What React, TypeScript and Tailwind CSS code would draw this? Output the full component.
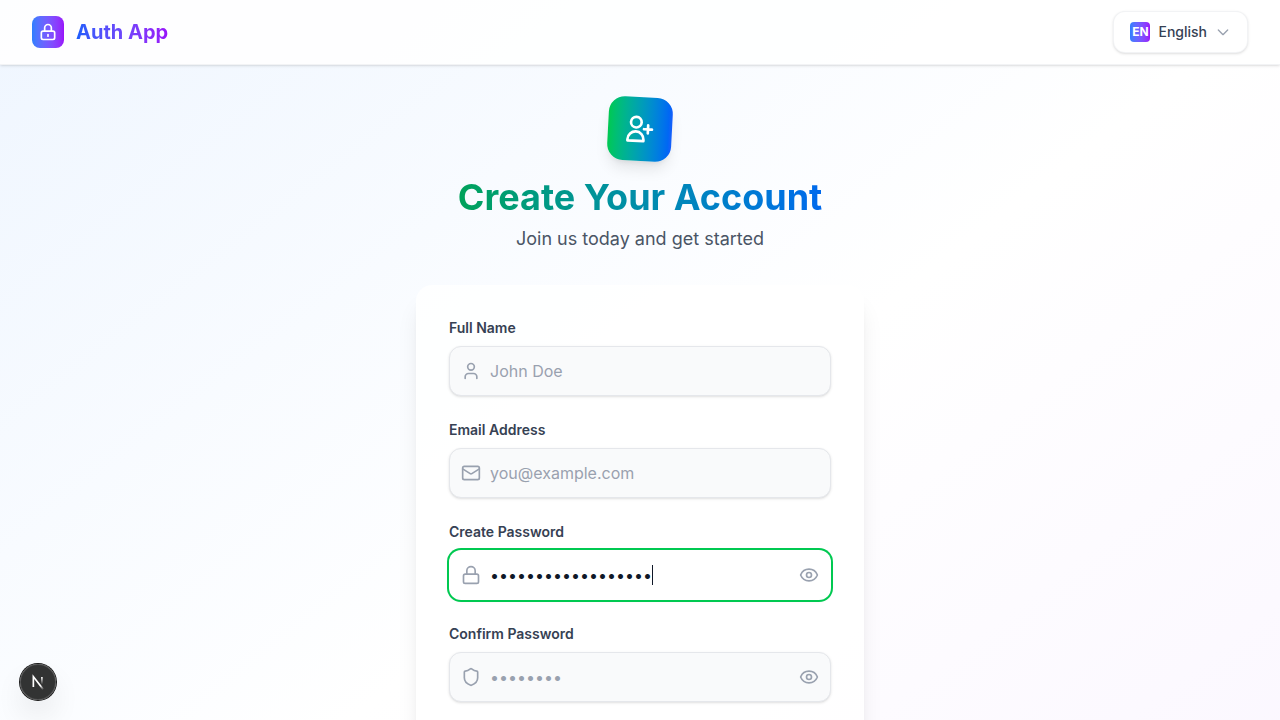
import { useState } from "react";
import type { ReactNode } from "react";
import { Eye, EyeOff, Lock, Mail, Shield, User } from "lucide-react";

type OutlineIconProps = { className?: string; d: string };

function OutlineIcon({ className, d }: OutlineIconProps) {
  return (
    <svg
      className={className}
      viewBox="0 0 24 24"
      fill="none"
      stroke="currentColor"
      strokeWidth={2}
      strokeLinecap="round"
      strokeLinejoin="round"
      aria-hidden="true"
    >
      <path d={d} />
    </svg>
  );
}

type FieldProps = {
  id: string;
  label: string;
  type: string;
  placeholder: string;
  icon: ReactNode;
  initialValue?: string;
  autoFocus?: boolean;
};

// Left text edge of the input and the advance of one masked character.
const TEXT_START = 41;
const BULLET_ADVANCE = 9;

function Field({ id, label, type, placeholder, icon, initialValue = "", autoFocus }: FieldProps) {
  const [visible, setVisible] = useState(false);
  const [value, setValue] = useState(initialValue);
  const isPassword = type === "password";
  const masked = isPassword && !visible && value.length > 0;
  return (
    <div>
      <label htmlFor={id} className="mb-2 block text-sm font-semibold text-gray-700">
        {label}
      </label>
      <div className="relative">
        <input
          id={id}
          type={isPassword && visible ? "text" : type}
          placeholder={placeholder}
          value={value}
          onChange={(event) => setValue(event.target.value)}
          autoFocus={autoFocus}
          className={`peer block w-full rounded-xl border border-gray-200 bg-gray-50 py-3 pr-12 pl-10 text-base text-gray-900 shadow-sm placeholder:text-gray-400 focus:border-transparent focus:bg-white focus:ring-2 focus:ring-green-500 focus:outline-none ${masked ? "caret-transparent" : ""}`}
        />
        <span className="pointer-events-none absolute inset-y-0 left-0 flex items-center pl-3 text-gray-400">
          {icon}
        </span>
        {masked && (
          <span
            aria-hidden="true"
            className="pointer-events-none absolute inset-y-0 hidden items-center peer-focus:flex"
            style={{ left: TEXT_START + BULLET_ADVANCE * value.length }}
          >
            <span className="h-5 w-px bg-gray-900" />
          </span>
        )}
        {isPassword && (
          <button
            type="button"
            aria-label={visible ? "Hide password" : "Show password"}
            onClick={() => setVisible(!visible)}
            className="absolute inset-y-0 right-0 flex items-center pr-3 text-gray-400"
          >
            {visible ? <EyeOff className="size-5" /> : <Eye className="size-5" />}
          </button>
        )}
      </div>
    </div>
  );
}

export default function App() {
  return (
    <div className="min-h-screen bg-linear-to-br from-blue-50 via-white to-purple-50 pb-64 font-['Inter',sans-serif]">
      <header className="sticky top-0 z-10 border-b border-gray-200/50 bg-white/90 shadow-sm">
        <div className="flex h-16 items-center justify-between px-8">
          <a href="#" className="flex items-center gap-3">
            <span className="flex size-8 items-center justify-center rounded-lg bg-linear-to-r from-blue-500 to-purple-600 text-white">
              <OutlineIcon
                className="size-5"
                d="M12 15v2m-6 4h12a2 2 0 002-2v-6a2 2 0 00-2-2H6a2 2 0 00-2 2v6a2 2 0 002 2zm10-10V7a4 4 0 00-8 0v4h8z"
              />
            </span>
            <span className="bg-linear-to-r from-blue-600 to-purple-600 bg-clip-text text-xl font-bold text-transparent">
              Auth App
            </span>
          </a>
          <button
            type="button"
            className="flex items-center gap-2 rounded-xl border border-gray-200/50 bg-white px-4 py-2.5 text-sm font-medium text-gray-700 shadow-sm"
          >
            <span className="flex size-5 items-center justify-center rounded-sm bg-linear-to-r from-blue-500 to-purple-600 text-xs font-bold text-white">
              EN
            </span>
            <span>English</span>
            <OutlineIcon className="size-4 text-gray-400" d="m19 9-7 7-7-7" />
          </button>
        </div>
      </header>

      <main className="mx-auto max-w-md pt-8">
        <div className="mb-8 text-center">
          <div className="mx-auto mb-4 flex size-16 rotate-3 items-center justify-center rounded-2xl bg-linear-to-r from-green-500 to-blue-600 text-white shadow-lg">
            <OutlineIcon
              className="size-8"
              d="M18 9v3m0 0v3m0-3h3m-3 0h-3m-2-5a4 4 0 11-8 0 4 4 0 018 0zM3 20a6 6 0 0112 0v1H3v-1z"
            />
          </div>
          <h1 className="mb-2 bg-linear-to-r from-green-600 to-blue-600 bg-clip-text text-4xl font-bold text-transparent">
            Create Your Account
          </h1>
          <p className="text-lg text-gray-600">Join us today and get started</p>
        </div>

        <form className="space-y-6 rounded-2xl border border-white/20 bg-white/80 p-8 shadow-xl">
          <Field id="name" label="Full Name" type="text" placeholder="John Doe" icon={<User className="size-5" />} />
          <Field
            id="email"
            label="Email Address"
            type="email"
            placeholder="you@example.com"
            icon={<Mail className="size-5" />}
          />
          <Field
            id="password"
            label="Create Password"
            type="password"
            placeholder="••••••••"
            icon={<Lock className="size-5" />}
            initialValue="examplepassword123"
            autoFocus
          />
          <Field
            id="confirm"
            label="Confirm Password"
            type="password"
            placeholder="••••••••"
            icon={<Shield className="size-5" />}
          />
        </form>
      </main>

      <button
        type="button"
        aria-label="Open developer tools"
        className="fixed bottom-5 left-5 flex size-9 items-center justify-center rounded-full bg-black/80 shadow-[0_0_0_1px_#171717,inset_0_0_0_1px_rgba(255,255,255,0.14),0_16px_32px_-8px_rgba(0,0,0,0.24)]"
      >
        <svg className="size-9" viewBox="0 0 40 40" fill="none" aria-hidden="true">
          <defs>
            <linearGradient id="diagonal" x1="9.955" y1="11.153" x2="15.865" y2="18.476" gradientUnits="userSpaceOnUse">
              <stop stopColor="white" />
              <stop offset="0.604" stopColor="white" stopOpacity="0" />
            </linearGradient>
            <linearGradient id="stem" x1="11.822" y1="1.404" x2="11.791" y2="9.626" gradientUnits="userSpaceOnUse">
              <stop stopColor="white" />
              <stop offset="1" stopColor="white" stopOpacity="0" />
            </linearGradient>
          </defs>
          <g transform="translate(12.5 13)">
            <path d="M13.3 15.2 2.343 1v11.61" stroke="url(#diagonal)" strokeWidth="1.86" />
            <path d="M11.825 1.5v11.6" stroke="url(#stem)" strokeWidth="1.86" />
          </g>
        </svg>
      </button>
    </div>
  );
}
